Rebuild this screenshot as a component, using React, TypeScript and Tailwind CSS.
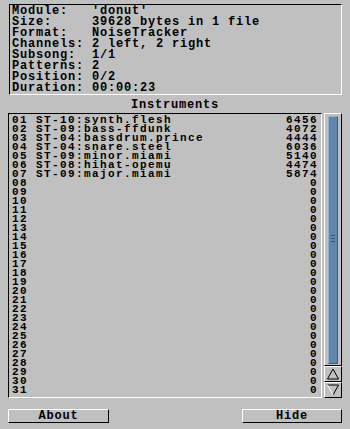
import React from "react"

const info = [
  "Module:   'donut'",
  "Size:     39628 bytes in 1 file",
  "Format:   NoiseTracker",
  "Channels: 2 left, 2 right",
  "Subsong:  1/1",
  "Patterns: 2",
  "Position: 0/2",
  "Duration: 00:00:23",
]

const named: [string, string][] = [
  ["ST-10:synth.flesh", "6456"],
  ["ST-09:bass-ffdunk", "4072"],
  ["ST-04:bassdrum.prince", "4444"],
  ["ST-04:snare.steel", "6036"],
  ["ST-09:minor.miami", "5140"],
  ["ST-08:hihat-opemu", "4474"],
  ["ST-09:major.miami", "5874"],
]

const rows = Array.from({ length: 31 }, (_, i) => {
  const num = String(i + 1).padStart(2, "0")
  const item = named[i]
  return { label: item ? `${num} ${item[0]}` : num, size: item ? item[1] : "0" }
})

export default function App() {
  return (
    <div className="w-[350px] h-[429px] overflow-hidden bg-[#c0c0c0] pt-[4px] font-['Liberation_Mono',monospace] font-bold text-black">
      {/* module info */}
      <div className="ml-[9px] w-[333px] h-[91px] border border-t-black border-l-black border-r-white border-b-white pl-[2px] pt-[1px] text-[12px] leading-[11px] tracking-[0.8px] whitespace-pre">
        {info.map((line) => (
          <div key={line}>{line}</div>
        ))}
      </div>

      <div className="h-[18px] pt-[5px] text-center text-[12px] leading-[11px] tracking-[0.8px]">Instruments</div>

      <div className="flex ml-[8px] gap-[2px]">
        {/* instrument list */}
        <div className="w-[314px] h-[285px] border border-t-black border-l-black border-r-white border-b-white pl-[3px] pr-[3px] pt-[2px] text-[11px] leading-[9px] tracking-[1.4px] whitespace-pre">
          {rows.map((r) => (
            <div key={r.label} className="flex justify-between h-[9px]">
              <span>{r.label}</span>
              <span>{r.size}</span>
            </div>
          ))}
        </div>

        {/* scrollbar */}
        <div className="flex flex-col w-[18px] h-[285px]">
          <div className="h-[253px] border border-t-white border-l-white border-r-black border-b-black pl-[3px] pt-[2px]">
            <div className="relative w-[10px] h-[248px] bg-[#6086ad] border border-t-[#8fb0d2] border-l-[#8fb0d2] border-r-[#3b5a82] border-b-[#3b5a82]">
              <div className="absolute left-[2px] top-[118px] flex flex-col gap-[2px]">
                <div className="w-[4px] h-[1px] bg-[#34527a]" />
                <div className="w-[4px] h-[1px] bg-[#34527a]" />
                <div className="w-[4px] h-[1px] bg-[#34527a]" />
              </div>
            </div>
          </div>
          <div className="h-[16px] border border-t-white border-l-white border-r-black border-b-black flex items-center justify-center">
            <svg width="14" height="12" viewBox="0 0 14 12">
              <polygon points="7,1 1.5,11 12.5,11" fill="none" stroke="#000" strokeWidth="1" />
            </svg>
          </div>
          <div className="h-[16px] border border-t-white border-l-white border-r-black border-b-black flex items-center justify-center">
            <svg width="14" height="12" viewBox="0 0 14 12">
              <polyline points="1.5,1 12.5,1 7,11" fill="none" stroke="#000" strokeWidth="1" />
              <line x1="1.5" y1="1" x2="7" y2="11" stroke="#fff" strokeWidth="1" />
            </svg>
          </div>
        </div>
      </div>

      <div className="flex justify-between ml-[8px] mr-[8px] mt-[11px]">
        <button className="w-[101px] h-[14px] border border-t-white border-l-white border-r-black border-b-black flex items-center justify-center text-[12px] leading-[11px] tracking-[0.8px]">
          About
        </button>
        <button className="w-[100px] h-[14px] border border-t-white border-l-white border-r-black border-b-black flex items-center justify-center text-[12px] leading-[11px] tracking-[0.8px]">
          Hide
        </button>
      </div>
    </div>
  )
}
